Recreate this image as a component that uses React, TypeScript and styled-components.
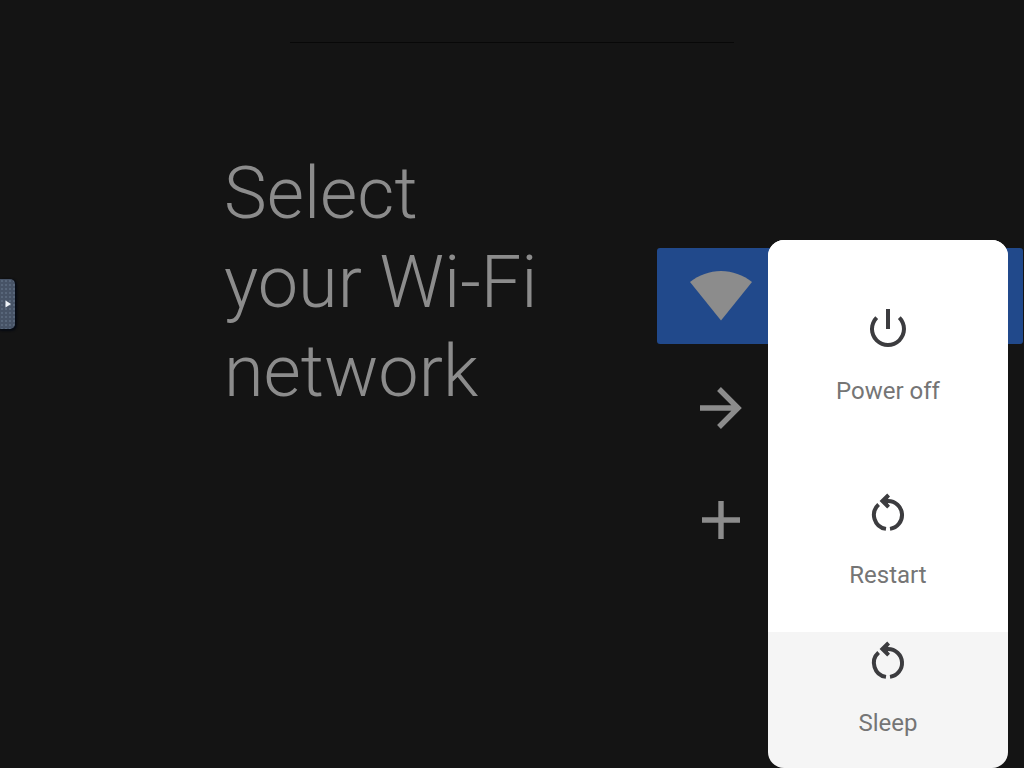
import React from "react";
import styled, { createGlobalStyle } from "styled-components";

const GlobalStyle = createGlobalStyle`
  *, *::before, *::after { box-sizing: border-box; }
  body {
    margin: 0;
    background: #141414;
    color: #8c8c8c;
    font-family: Roboto, "Liberation Sans", sans-serif;
  }
`;

const Screen = styled.div`
  position: relative;
  display: flex;
  flex-direction: column;
  min-height: 100vh;
  overflow: hidden;
`;

const Divider = styled.hr`
  width: 444px;
  max-width: 80%;
  height: 1px;
  margin: 42px auto 0;
  border: 0;
  background: #080808;
`;

const Content = styled.main`
  display: flex;
  align-items: flex-start;
  justify-content: space-between;
  padding: 106px 1px 0 224px;
`;

const Title = styled.h1`
  max-width: 328px;
  margin: 0;
  font-size: 72px;
  font-weight: 300;
  line-height: 89px;
`;

const NetworkList = styled.div`
  display: flex;
  flex-direction: column;
  gap: 16px;
  width: 366px;
  margin-top: 99px;
`;

const NetworkRow = styled.button<{ $selected?: boolean }>`
  display: flex;
  align-items: center;
  height: 96px;
  padding: 0 32px;
  border: 0;
  border-radius: 3px;
  background: ${(p) => (p.$selected ? "#21498b" : "transparent")};
  color: #8c8c8c;
`;

const RowIcon = styled.svg`
  width: 64px;
  height: 64px;
`;

const DrawerHandle = styled.button`
  position: absolute;
  top: 279px;
  left: 0;
  display: flex;
  align-items: center;
  justify-content: flex-end;
  width: 15px;
  height: 50px;
  padding: 0 4px 0 0;
  border: 0;
  border-radius: 0 5px 5px 0;
  background: radial-gradient(circle at 2px 2px, #58667a 1px, transparent 1px) 0 0 / 4px 4px, #475366;
  box-shadow: 1px 1px 2px 1px #060a12;
`;

const PowerMenu = styled.div`
  position: absolute;
  right: 16px;
  bottom: 0;
  width: 240px;
  overflow: hidden;
  border-radius: 16px;
  background: #f5f5f5;
`;

const MenuSection = styled.div`
  display: flex;
  flex-direction: column;
  padding-top: 24px;
  background: #ffffff;
`;

const MenuItem = styled.button<{ $compact?: boolean }>`
  display: flex;
  flex-direction: column;
  align-items: center;
  gap: 23px;
  width: 100%;
  padding: ${(p) => (p.$compact ? "4px 0 31px" : "40px 0 43px")};
  border: 0;
  background: transparent;
  color: #757575;
  font-family: inherit;
  font-size: 24px;
  line-height: 28px;
`;

const MenuIcon = styled.svg`
  width: 50px;
  height: 50px;
  color: #3c3c3f;
`;

const PowerIcon = () => (
  <MenuIcon viewBox="-0.5 -0.5 25 25" fill="currentColor" aria-hidden="true">
    <path d="M11 2h2v10h-2z" />
    <path d="M18.37 5.64l-1.41 1.41c2.73 2.73 2.72 7.16-.01 9.89-2.73 2.73-7.17 2.73-9.89.01-2.73-2.73-2.74-7.18-.01-9.91l-1.41-1.4c-3.51 3.51-3.51 9.21.01 12.73 3.51 3.51 9.21 3.51 12.72-.01 3.51-3.51 3.51-9.2 0-12.72z" />
  </MenuIcon>
);

const RestartIcon = () => (
  <MenuIcon viewBox="0 0 50 50" fill="none" stroke="currentColor" strokeWidth="4" aria-hidden="true">
    <path d="M23 40.86A14 14 0 0 1 15.6 16.6" />
    <path d="M27 40.86A14 14 0 0 0 25 13H20" />
    <path d="M16.6 13L24.2 5.6L27 8.4L25 10.8V15.4L27 17.8L24.2 20.6z" fill="currentColor" stroke="none" />
  </MenuIcon>
);

export default function App() {
  return (
    <>
      <GlobalStyle />
      <Screen>
        <Divider />
        <Content>
          <Title>Select your Wi-Fi network</Title>
          <NetworkList>
            <NetworkRow $selected aria-label="Wi-Fi network">
              <RowIcon viewBox="0 0 64 64" fill="currentColor" aria-hidden="true">
                <path d="M1 18C10 11 20.5 7 32 7S54 11 63 18L32 56.5z" />
              </RowIcon>
            </NetworkRow>
            <NetworkRow aria-label="See all networks">
              <RowIcon viewBox="0 0 64 64" fill="none" stroke="currentColor" strokeWidth="5.4" aria-hidden="true">
                <path d="M11 32H50M30 13L49 32L30 51" />
              </RowIcon>
            </NetworkRow>
            <NetworkRow aria-label="Add new network">
              <RowIcon viewBox="0 0 64 64" fill="none" stroke="currentColor" strokeWidth="5.4" aria-hidden="true">
                <path d="M13 32H51M32 13V51" />
              </RowIcon>
            </NetworkRow>
          </NetworkList>
        </Content>
        <DrawerHandle aria-label="Open control panel">
          <svg width="6" height="8" viewBox="0 0 6 8" fill="#eef2f7" aria-hidden="true">
            <path d="M0.5 0.5L6 4L0.5 7.5z" />
          </svg>
        </DrawerHandle>
        <PowerMenu role="menu">
          <MenuSection>
            <MenuItem role="menuitem">
              <PowerIcon />
              Power off
            </MenuItem>
            <MenuItem role="menuitem">
              <RestartIcon />
              Restart
            </MenuItem>
          </MenuSection>
          <MenuItem role="menuitem" $compact>
            <RestartIcon />
            Sleep
          </MenuItem>
        </PowerMenu>
      </Screen>
    </>
  );
}
